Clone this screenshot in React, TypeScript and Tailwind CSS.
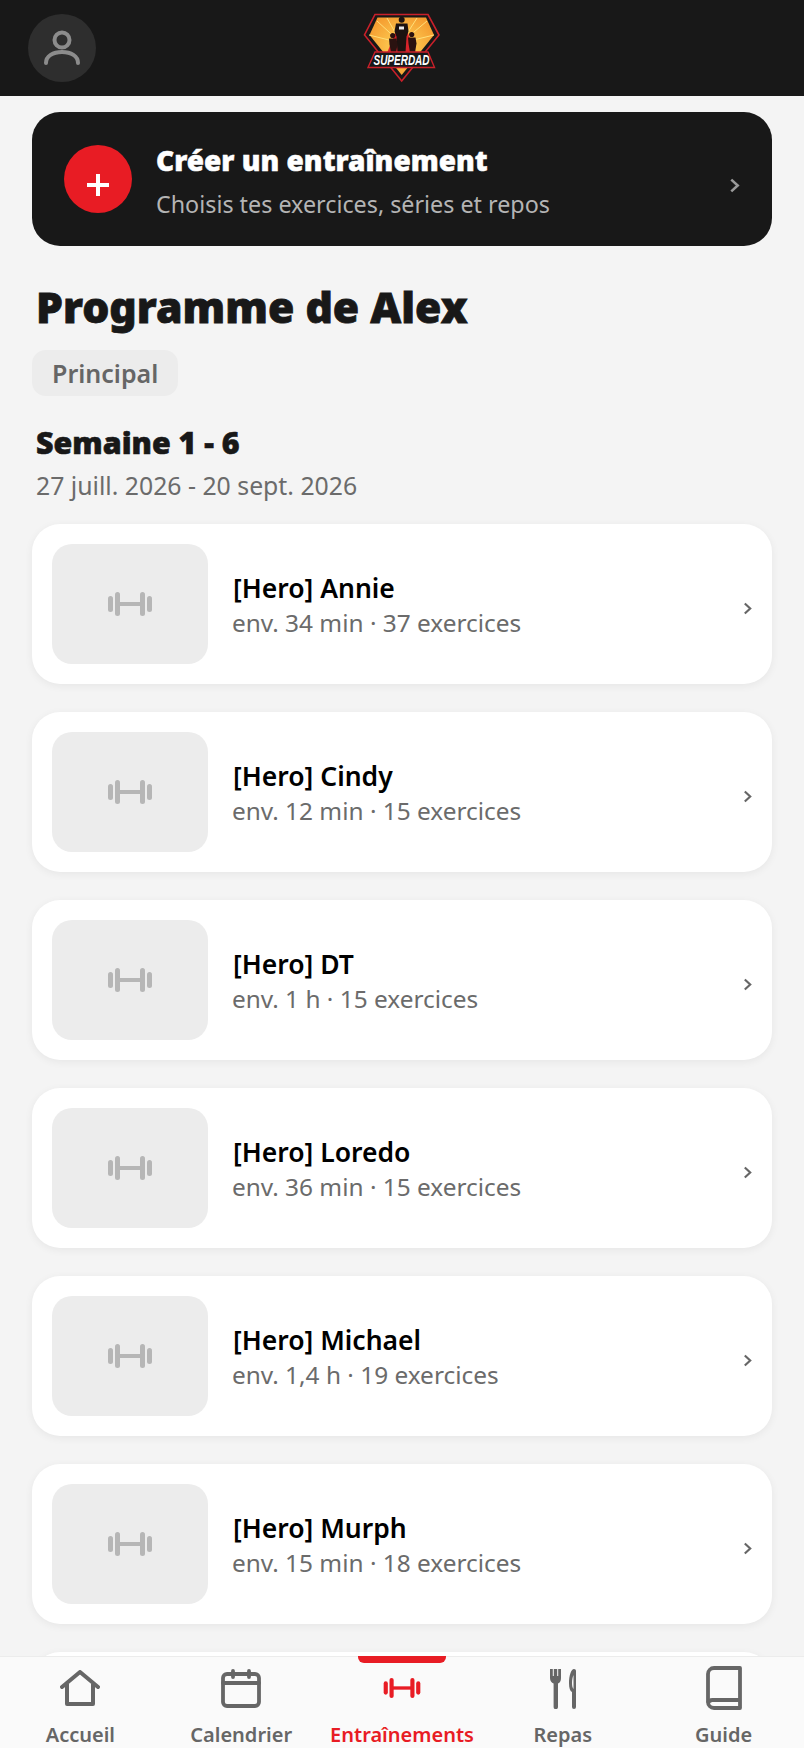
const workouts = [
  { name: "[Hero] Annie", meta: "env. 34 min · 37 exercices" },
  { name: "[Hero] Cindy", meta: "env. 12 min · 15 exercices" },
  { name: "[Hero] DT", meta: "env. 1 h · 15 exercices" },
  { name: "[Hero] Loredo", meta: "env. 36 min · 15 exercices" },
  { name: "[Hero] Michael", meta: "env. 1,4 h · 19 exercices" },
  { name: "[Hero] Murph", meta: "env. 15 min · 18 exercices" },
];

function Logo() {
  return (
    <svg width="78" height="70" viewBox="0 0 78 70" className="overflow-visible">
      <defs>
        <radialGradient id="sun" cx="50%" cy="50%" r="60%">
          <stop offset="0%" stopColor="#ffd65a" />
          <stop offset="100%" stopColor="#f49a2e" />
        </radialGradient>
      </defs>
      <polygon points="12,1.5 65,1.5 76,22 38.700,68 1.500,22" fill="#181818" stroke="#c9202a" strokeWidth="1.6" />
      <polygon points="14.500,4.500 63,4.500 71,22 38.700,62 6.500,22" fill="url(#sun)" />
      {/* rays */}
      <path d="M38 30 14 8M38 30 24 5M38 30 6 22M38 30 54 5M38 30 64 8M38 30 71 22" stroke="#ffe07a" strokeWidth="1" />
      {/* cape */}
      <path d="M33 18 24 40h29l-9-22z" fill="#d8232a" />
      {/* dad */}
      <circle cx="38.700" cy="6.800" r="3" fill="#1c1210" />
      <path d="M33 10.500h11.500l1 8-2 5-1 16h-8l-1-16-2-5z" fill="#1c1210" />
      <rect x="36" y="13.500" width="5" height="3" fill="#e8e8e8" />
      {/* kids */}
      <circle cx="29.700" cy="22.500" r="2.600" fill="#2a1210" />
      <path d="M26 25.500h7.500l1 6-1.500 8h-5l-1.500-8z" fill="#2a1210" />
      <circle cx="48.700" cy="21.500" r="2.600" fill="#2a1210" />
      <path d="M45 24.500h7.500l1 6-1.500 9h-5l-1.500-9z" fill="#2a1210" />
      {/* banner */}
      <polygon points="12,39 65,39 71.500,54.500 5,54.500" fill="#181818" stroke="#c9202a" strokeWidth="1.4" />
      <text x="38.500" y="52" textAnchor="middle" fontSize="14.500" fontWeight="700" fontStyle="italic" fill="#ffffff" fontFamily="'Liberation Sans', sans-serif" textLength="56" lengthAdjust="spacingAndGlyphs">SUPERDAD</text>
    </svg>
  );
}

function UserIcon() {
  return (
    <svg width="38" height="38" viewBox="0 0 38 38" fill="none" stroke="#8c8c8c" strokeWidth="4" strokeLinecap="round">
      <circle cx="19" cy="11" r="7.5" />
      <path d="M3 34c0-7 7-11 16-11s16 4 16 11" />
    </svg>
  );
}

function Chevron({ className }: { className: string }) {
  return (
    <svg className={className} viewBox="0 0 10 14" fill="none" stroke="currentColor" strokeWidth="2.4">
      <path d="M2 1.500 8 7l-6 5.500" />
    </svg>
  );
}

function Barbell({ className }: { className: string }) {
  return (
    <svg className={className} viewBox="0 0 44 24" fill="currentColor">
      <rect x="0" y="4" width="5" height="16" rx="2.500" />
      <rect x="7" y="0" width="5" height="24" rx="2.500" />
      <rect x="10" y="10" width="24" height="4" />
      <rect x="32" y="0" width="5" height="24" rx="2.500" />
      <rect x="39" y="4" width="5" height="16" rx="2.500" />
    </svg>
  );
}

function WorkoutCard({ name, meta }: { name: string; meta: string }) {
  return (
    <div className="flex h-[160px] shrink-0 items-center rounded-[28px] bg-white pr-5 pl-5 shadow-[0_2px_8px_rgba(0,0,0,0.06)]">
      <div className="flex h-[120px] w-[156px] shrink-0 items-center justify-center rounded-[20px] bg-[#ececec]">
        <Barbell className="h-[24px] w-[44px] text-[#b6b6b6]" />
      </div>
      <div className="ml-[25px] flex-1 pt-[5px]">
        <div className="text-[26.5px] leading-[33px] font-semibold text-black">{name}</div>
        <div className="ml-[-1px] text-[24.4px] leading-[36px] text-[#6b6b6b]">{meta}</div>
      </div>
      <Chevron className="mt-[9px] h-[13px] w-[9px] text-[#666666]" />
    </div>
  );
}

function NavItem({ label, active, icon }: { label: string; active?: boolean; icon: React.ReactNode }) {
  return (
    <div className={`relative flex flex-col items-center ${active ? "text-[#e81c24]" : "text-[#666666]"}`}>
      {active && <div className="absolute top-[-1px] h-[7px] w-[88px] rounded-b-[6px] bg-[#e81c24]" />}
      <div className="flex h-[62px] w-full items-center justify-center">{icon}</div>
      <div className="mt-[3px] text-[20px] leading-[26px] font-semibold whitespace-nowrap">{label}</div>
    </div>
  );
}

export default function App() {
  return (
    <div className="flex h-[1748px] flex-col overflow-hidden bg-[#f4f4f4] font-['Noto_Sans',sans-serif]">
      <header className="relative flex h-[96px] shrink-0 items-center bg-[#181818] pl-[28px]">
        <div className="flex h-[68px] w-[68px] items-center justify-center rounded-full bg-[#2e2e2e]">
          <UserIcon />
        </div>
        <div className="absolute top-[13px] left-[363px]">
          <Logo />
        </div>
      </header>

      <main className="flex-1 overflow-hidden px-[32px] pt-[16px]">
        <div className="flex h-[134px] items-center rounded-[28px] bg-[#181818] pr-[32px] pl-[32px]">
          <div className="flex h-[68px] w-[68px] shrink-0 items-center justify-center rounded-full bg-[#e81c24]">
            <svg className="mt-[12px]" width="22" height="22" viewBox="0 0 22 22" fill="#ffffff">
              <rect x="9" y="0" width="4" height="22" />
              <rect x="0" y="9" width="22" height="4" />
            </svg>
          </div>
          <div className="ml-[24px] flex-1 pt-[3px]">
            <div className="text-[28px] leading-[38px] font-black text-white [-webkit-text-stroke:0.5px_#ffffff]">Créer un entraînement</div>
            <div className="mt-[9px] text-[23.3px] leading-[32px] text-[#b4b4b4]">Choisis tes exercices, séries et repos</div>
          </div>
          <Chevron className="mt-[12px] h-[15px] w-[11px] text-[#9a9a9a]" />
        </div>

        <h1 className="mt-[33px] pl-[4px] text-[42.7px] leading-[56px] font-black text-[#181818] [-webkit-text-stroke:0.8px_#181818]">Programme de Alex</h1>
        <div className="mt-[15px] inline-flex h-[46px] items-center rounded-[14px] bg-[#ececec] px-[20px] pt-[2px] text-[25px] font-semibold text-[#666666]">
          Principal
        </div>
        <h2 className="mt-[28px] pl-[4px] text-[30.4px] leading-[38px] font-black text-[#181818] [-webkit-text-stroke:0.6px_#181818]">Semaine 1 - 6</h2>
        <p className="mt-[6px] pl-[4px] text-[24.8px] leading-[34px] text-[#6b6b6b]">27 juill. 2026 - 20 sept. 2026</p>

        <div className="mt-[22px] flex flex-col gap-[28px]">
          {workouts.map((w) => (
            <WorkoutCard key={w.name} name={w.name} meta={w.meta} />
          ))}
          {/* next card, only its top edge shows above the nav */}
          <div className="h-[160px] shrink-0 rounded-[28px] bg-white shadow-[0_2px_8px_rgba(0,0,0,0.06)]" />
        </div>
      </main>

      <nav className="grid h-[92px] shrink-0 grid-cols-5 border-t border-[#ececec] bg-[#fafafa]">
        <NavItem
          label="Accueil"
          icon={
            <svg width="40" height="36" viewBox="0 0 40 36" fill="none" stroke="currentColor" strokeWidth="4" strokeLinejoin="round" strokeLinecap="round">
              <path d="M2 17 20 2l18 15M7 14v20h26V14" />
            </svg>
          }
        />
        <NavItem
          label="Calendrier"
          icon={
            <svg width="40" height="39" viewBox="0 0 40 39" fill="none" stroke="currentColor" strokeWidth="3.800" strokeLinecap="round">
              <rect x="2" y="5" width="36" height="32" rx="4" />
              <path d="M2 14h36M12 2v6M28 2v6" />
            </svg>
          }
        />
        <NavItem label="Entraînements" active icon={<Barbell className="h-[20px] w-[38px]" />} />
        <NavItem
          label="Repas"
          icon={
            <svg width="26" height="41" viewBox="0 0 26 41" fill="currentColor">
              <path d="M0 1h2.800v7h1V1h3.400v7h1V1H11v9c0 3-1 4.500-3 5.500V39a2.200 2.200 0 0 1-4.400 0V15.500C1.500 14.500 0 13 0 10z" />
              <path fillRule="evenodd" d="M24 1c1.200 0 2 .8 2 2v36a2 2 0 0 1-4 0V24c-2-1-3-4-3-9 0-7 2-14 5-14zm-.5 6c-1 2-1.500 5-1.500 8 0 3 .5 5 1.500 6z" />
            </svg>
          }
        />
        <NavItem
          label="Guide"
          icon={
            <svg width="36" height="44" viewBox="0 0 36 44" fill="none" stroke="currentColor" strokeWidth="3.800" strokeLinejoin="round">
              <path d="M34 2H8a6 6 0 0 0-6 6v28a6 6 0 0 0 6 6h26z" />
              <path d="M2 37a5 5 0 0 1 5-3h27" />
            </svg>
          }
        />
      </nav>
    </div>
  );
}
